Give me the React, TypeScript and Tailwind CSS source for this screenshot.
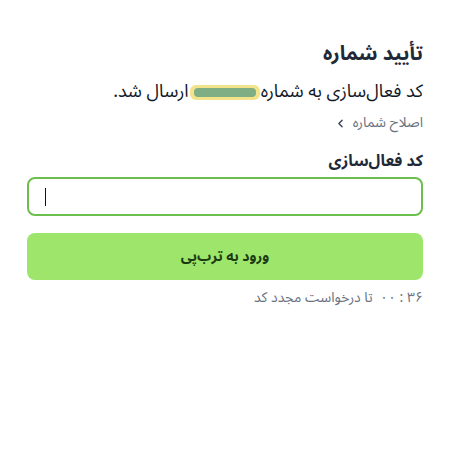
import React from 'react';
import { ChevronLeft } from 'lucide-react';

export default function App() {
  return (
    <div
      dir="rtl"
      className="w-[458px] h-[462px] bg-white pr-[35px] pl-[27px] pt-[40px] text-[#1f2937]"
      style={{ fontFamily: '"Noto Sans Arabic", "DejaVu Sans", sans-serif' }}
    >
      <h1 className="text-[20px] font-bold leading-[28px] text-[#1f2937]">تأیید شماره</h1>

      <p className="mt-[11px] text-[18px] leading-[24px] text-[#111827] whitespace-nowrap">
        کد فعال‌سازی به شماره
        <span className="inline-block align-middle mx-[1px] w-[70px] h-[15px] rounded-[6px] bg-[#f3e38a] relative blur-[0.5px]">
          <span className="absolute inset-x-[4px] top-[3px] h-[9px] rounded-[4px] bg-[#7fae85]" />
        </span>
        ارسال شد.
      </p>

      <button className="mt-[10px] flex items-center gap-[6px] text-[14px] leading-[20px] text-[#6b7280]">
        <span>اصلاح شماره</span>
        <ChevronLeft className="w-[13px] h-[13px] text-[#374151]" strokeWidth={2.5} />
      </button>

      <label className="mt-[18px] block text-[16px] font-bold leading-[20px] text-[#1f2937]">کد فعال‌سازی</label>

      <div className="mt-[6px] h-[39px] rounded-[8px] border-2 border-[#6cbf4c] flex items-center justify-end pl-[16px]">
        <span className="w-[1px] h-[18px] bg-[#111]" />
      </div>

      <button className="mt-[17px] w-full h-[47px] rounded-[8px] bg-[#9de56b] text-[14px] font-bold text-[#1c3a12]">
        ورود به ترب‌پی
      </button>

      <p className="mt-[8px] text-[14px] leading-[20px] text-[#6b7280]">۳۶ : ۰۰ &nbsp;تا درخواست مجدد کد</p>
    </div>
  );
}
